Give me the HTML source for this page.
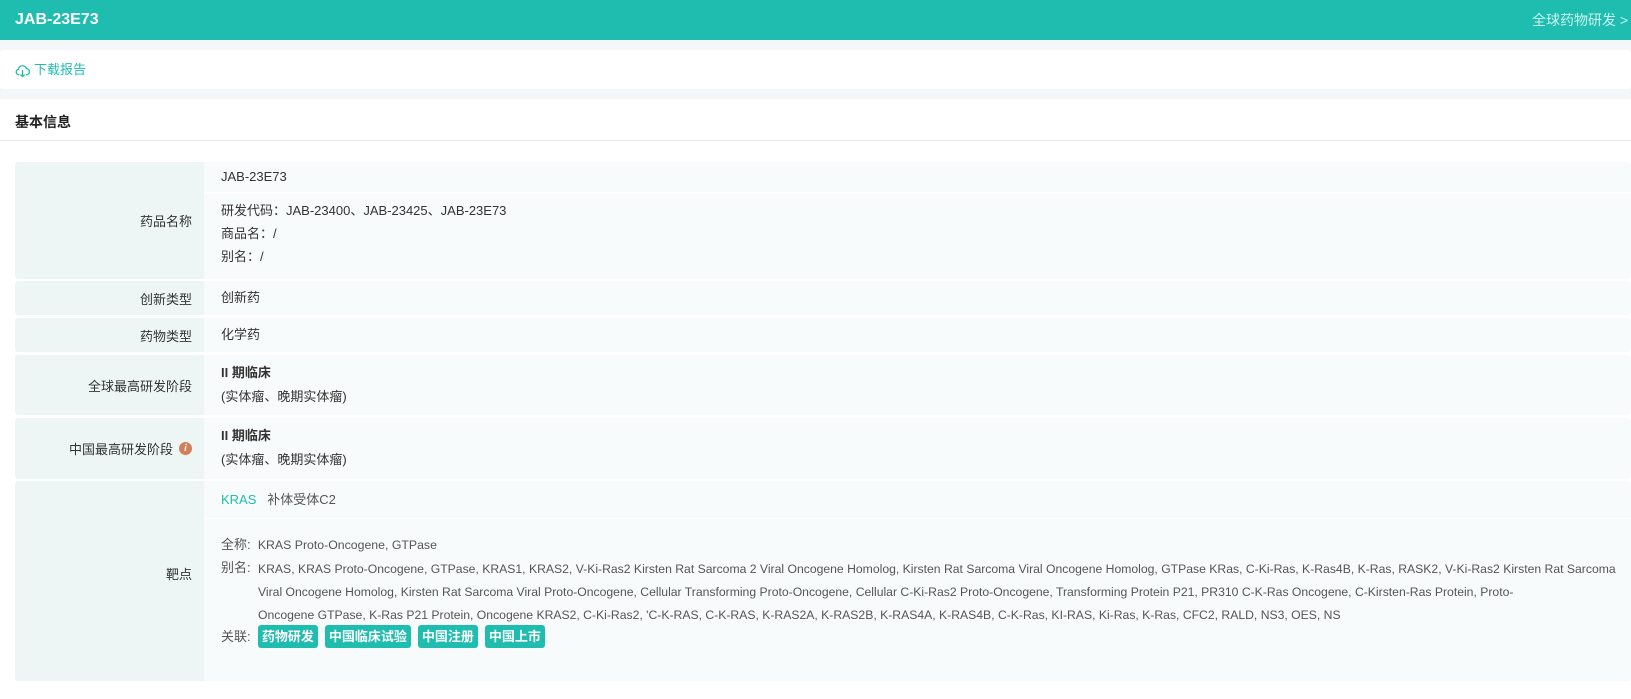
<!DOCTYPE html>
<html><head><meta charset="utf-8"><style>
*{margin:0;padding:0;box-sizing:border-box}
body{width:1631px;height:665px;overflow:hidden;background:#f5f6f8;font-family:"Liberation Sans","Noto Sans CJK SC",sans-serif;color:#333;font-size:13px;position:relative}
.hdr{position:absolute;left:0;top:0;width:1631px;height:40px;background:#1fbdb0}
.hdr .t{position:absolute;left:15px;top:10px;color:#fff;font-weight:bold;font-size:16px;line-height:20px}
.hdr .bc{position:absolute;left:1532px;top:11px;color:#c9f3ee;font-size:14px;line-height:18px;white-space:nowrap}
.c1{position:absolute;left:0;top:50px;width:1631px;height:39px;background:#fff;border-radius:3px}
.dl{position:absolute;left:15px;top:11px;color:#1fbdb0;font-size:13px;line-height:18px;display:flex;align-items:center;gap:4px}
.c2{position:absolute;left:0;top:99px;width:1631px;height:600px;background:#fff}
.ttl{position:absolute;left:15px;top:112px;font-weight:bold;font-size:14px;line-height:20px;color:#222}
.line{position:absolute;left:0;top:140px;width:1631px;height:1px;background:#e8e8e8}
.row{position:absolute;left:15px;width:1616px;display:flex;border-radius:3px;overflow:hidden}
.lb{width:189px;background:#edf6f5;display:flex;align-items:center;justify-content:flex-end;padding-right:12px;color:#333}
.vl{flex:1;background:#f8fbfb;padding-left:17px;color:#333;position:relative}
.a{position:absolute;left:221px;line-height:20px;white-space:nowrap}
.g{color:#555}
.tag{display:inline-block;background:#1fbdb0;color:#fff;font-weight:bold;border-radius:3px;height:23px;line-height:23px;padding:0 4px;margin-right:7px}
</style></head><body>
<div class="hdr"><div class="t">JAB-23E73</div><div class="bc">全球药物研发 &gt; 详情</div></div>
<div class="c1"><div class="dl"><svg width="15" height="15" viewBox="0 0 16 16" fill="none" stroke="#1fbdb0" stroke-width="1.4"><path d="M4.5 12.5H4A3 3 0 0 1 3.6 6.6 4.5 4.5 0 0 1 12.3 6 3.2 3.2 0 0 1 12 12.5h-.5"/><path d="M8 7.5v7M5.8 12.3 8 14.5l2.2-2.2"/></svg>下载报告</div></div>
<div class="c2"></div>
<div class="ttl">基本信息</div>
<div class="line"></div>

<div class="row" style="top:162px;height:117px"><div class="lb">药品名称</div><div class="vl"><div style="position:absolute;left:0;right:0;top:30px;height:2px;background:#fff"></div></div></div>
<div class="a" style="top:167px">JAB-23E73</div>
<div class="a" style="top:201px">研发代码：JAB-23400、JAB-23425、JAB-23E73</div>
<div class="a" style="top:224px">商品名：/</div>
<div class="a" style="top:247px">别名：/</div>

<div class="row" style="top:281px;height:34px"><div class="lb">创新类型</div><div class="vl"></div></div>
<div class="a" style="top:288px">创新药</div>

<div class="row" style="top:318px;height:34px"><div class="lb">药物类型</div><div class="vl"></div></div>
<div class="a" style="top:325px">化学药</div>

<div class="row" style="top:355px;height:60px"><div class="lb">全球最高研发阶段</div><div class="vl"></div></div>
<div class="a" style="top:363px;font-weight:bold">II 期临床</div>
<div class="a" style="top:387px">(实体瘤、晚期实体瘤)</div>

<div class="row" style="top:418px;height:61px"><div class="lb">中国最高研发阶段<span style="display:inline-block;width:13px;height:13px;border-radius:50%;background:#d0805a;color:#fff;font-size:10px;font-style:italic;font-weight:bold;line-height:13px;text-align:center;margin-left:6px;font-family:'Liberation Serif',serif">i</span></div><div class="vl"></div></div>
<div class="a" style="top:426px;font-weight:bold">II 期临床</div>
<div class="a" style="top:450px">(实体瘤、晚期实体瘤)</div>

<div class="row" style="top:481px;height:200px"><div class="lb" style="padding-bottom:16px">靶点</div><div class="vl"><div style="position:absolute;left:0;right:0;top:37px;height:1px;background:#fff"></div></div></div>
<div class="a" style="top:490px"><span style="color:#1fbdb0">KRAS</span>&nbsp;&nbsp; <span class="g">补体受体C2</span></div>
<div class="a g" style="top:535px">全称:&nbsp; <span style="font-size:12.3px">KRAS Proto-Oncogene, GTPase</span></div>
<div class="a g" style="top:558px">别名:</div>
<div class="a g" style="left:258px;top:558px;line-height:23px;font-size:12.2px">KRAS, KRAS Proto-Oncogene, GTPase, KRAS1, KRAS2, V-Ki-Ras2 Kirsten Rat Sarcoma 2 Viral Oncogene Homolog, Kirsten Rat Sarcoma Viral Oncogene Homolog, GTPase KRas, C-Ki-Ras, K-Ras4B, K-Ras, RASK2, V-Ki-Ras2 Kirsten Rat Sarcoma<br>Viral Oncogene Homolog, Kirsten Rat Sarcoma Viral Proto-Oncogene, Cellular Transforming Proto-Oncogene, Cellular C-Ki-Ras2 Proto-Oncogene, Transforming Protein P21, PR310 C-K-Ras Oncogene, C-Kirsten-Ras Protein, Proto-<br>Oncogene GTPase, K-Ras P21 Protein, Oncogene KRAS2, C-Ki-Ras2, 'C-K-RAS, C-K-RAS, K-RAS2A, K-RAS2B, K-RAS4A, K-RAS4B, C-K-Ras, KI-RAS, Ki-Ras, K-Ras, CFC2, RALD, NS3, OES, NS</div>
<div class="a" style="top:625px;line-height:23px"><span class="g">关联:&nbsp;</span> <span class="tag">药物研发</span><span class="tag">中国临床试验</span><span class="tag">中国注册</span><span class="tag">中国上市</span></div>
</body></html>
